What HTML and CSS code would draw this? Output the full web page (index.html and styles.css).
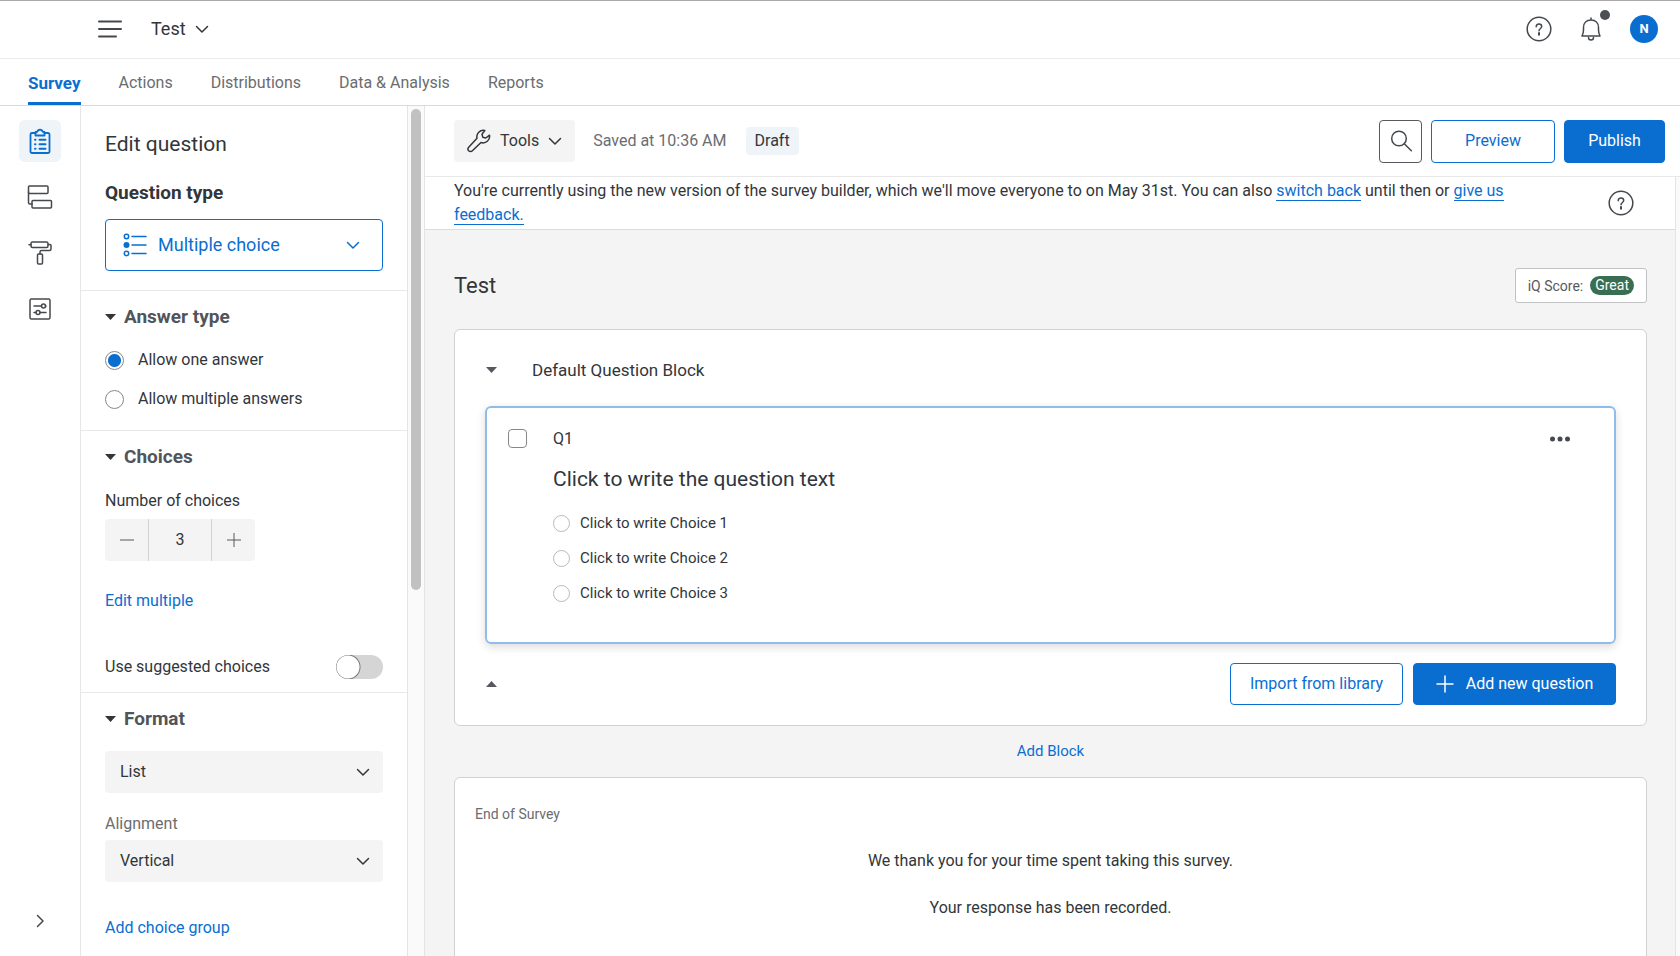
FILE: index.html
```html
<!DOCTYPE html>
<html lang="en">
<head>
<meta charset="utf-8">
<title>Test - Survey</title>
<link rel="stylesheet" href="styles.css">
</head>
<body>
<svg class="defs" aria-hidden="true">
  <symbol id="chevron" viewBox="0 0 14 14"><path d="M1.5 4.5 7 10l5.500-5.500"/></symbol>
  <symbol id="help" viewBox="0 0 26 26"><circle cx="13" cy="13" r="11.800"/><path d="M10.200 10.800c0-1.700 1.200-2.800 2.800-2.800s2.700 1 2.700 2.500c0 2-2.700 2.100-2.700 4.300"/><path d="M13 17v1.700" stroke-width="2"/></symbol>
</svg>
<div class="app">
  <header class="topbar">
    <button class="icon-btn" aria-label="Menu"><svg class="icon menu-icon" viewBox="0 0 24 20"><path d="M1 2.500h22M1 10h22M1 17.500h17"/></svg></button>
    <button class="project">Test <svg class="icon chev"><use href="#chevron"/></svg></button>
    <div class="topbar-actions">
      <button class="icon-btn" aria-label="Help"><svg class="icon i26"><use href="#help"/></svg></button>
      <button class="icon-btn bell" aria-label="Notifications"><svg class="icon i26" viewBox="0 0 26 26"><path d="M13 2v2M4 20h18c-1-2-1.500-4-1.500-6v-2.500c0-4.500-3-7.500-7.500-7.500s-7.500 3-7.500 7.500V14c0 2-.5 4-1.500 6z"/><path d="M10.500 21.500c0 1.500 1 2.500 2.500 2.500s2.500-1 2.500-2.500"/></svg><span class="dot"></span></button>
      <button class="avatar" aria-label="Account">N</button>
    </div>
  </header>
  <nav class="tabs">
    <a class="tab active" href="#">Survey</a>
    <a class="tab" href="#">Actions</a>
    <a class="tab" href="#">Distributions</a>
    <a class="tab" href="#">Data &amp; Analysis</a>
    <a class="tab" href="#">Reports</a>
  </nav>
  <div class="workspace">
    <aside class="rail">
      <button class="rail-btn selected" aria-label="Builder"><svg class="icon i26 bold" viewBox="0 0 26 26"><path d="M8.500 5H5a1.500 1.500 0 0 0-1.500 1.500V23.500A1.500 1.500 0 0 0 5 25h16a1.500 1.500 0 0 0 1.500-1.500v-17A1.500 1.500 0 0 0 21 5h-3.500"/><path d="M8.500 3.800h1.800a2.800 2.800 0 0 1 5.400 0h1.800v3.700h-9z"/><path d="M8 11.800h.5M12.500 11.800h6M8 16.300h.5M12.500 16.300h6M8 20.800h.5M12.500 20.800h6" stroke-width="2"/></svg></button>
      <button class="rail-btn" aria-label="Survey flow"><svg class="icon i26" viewBox="0 0 26 26"><rect x="1.500" y="2" width="19.500" height="7.500" rx="1"/><rect x="5" y="16.500" width="19.500" height="7.500" rx="1"/><path d="M1.500 8v10.500a1.500 1.500 0 0 0 1.500 1.500h2"/></svg></button>
      <button class="rail-btn" aria-label="Look and feel"><svg class="icon i26" viewBox="0 0 26 26"><rect x="4" y="2" width="17" height="5.500" rx="1.500"/><path d="M4 4.800H2M21 4.500h2a1 1 0 0 1 1 1V9a1.500 1.500 0 0 1-1.500 1.500h-8A1.500 1.500 0 0 0 13 12v2"/><rect x="10.500" y="14" width="5" height="10" rx="1"/></svg></button>
      <button class="rail-btn" aria-label="Survey options"><svg class="icon i26" viewBox="0 0 26 26"><rect x="3" y="3" width="20" height="20" rx="1.500"/><path d="M7 10h7.500M18.500 10h.5M7 16.500h2M13 16.500h6"/><circle cx="16.500" cy="10" r="2"/><circle cx="11" cy="16.500" r="2"/></svg></button>
      <button class="icon-btn rail-expand" aria-label="Expand"><svg class="icon chev" viewBox="0 0 14 14"><path d="M4.500 1.500 10 7l-5.500 5.500"/></svg></button>
    </aside>
    <section class="panel">
      <div class="group intro">
        <h1 class="panel-title">Edit question</h1>
        <h2 class="panel-subtitle">Question type</h2>
        <button class="type-picker">
          <svg class="icon i24" viewBox="0 0 24 24"><circle cx="3.500" cy="3.500" r="2.200"/><circle cx="3.500" cy="12" r="3" fill="currentColor" stroke="none"/><circle cx="3.500" cy="20.500" r="2.200"/><path d="M9 3.500h14M9 12h14M9 20.500h14"/></svg>
          <span>Multiple choice</span>
          <svg class="icon chev push"><use href="#chevron"/></svg>
        </button>
      </div>
      <div class="group answers">
        <h3 class="group-title"><span class="caret"></span>Answer type</h3>
        <label class="radio-row"><input class="radio" type="radio" name="answers" checked>Allow one answer</label>
        <label class="radio-row"><input class="radio" type="radio" name="answers">Allow multiple answers</label>
      </div>
      <div class="group choices">
        <h3 class="group-title"><span class="caret"></span>Choices</h3>
        <label class="field-label" for="count">Number of choices</label>
        <div class="stepper">
          <button class="step" aria-label="Fewer"><svg class="icon chev" viewBox="0 0 14 14"><path d="M0 7h14"/></svg></button>
          <input class="count" id="count" type="text" value="3">
          <button class="step" aria-label="More"><svg class="icon chev" viewBox="0 0 14 14"><path d="M0 7h14M7 0v14"/></svg></button>
        </div>
        <a class="link" href="#">Edit multiple</a>
        <label class="toggle-row">Use suggested choices<input class="toggle" type="checkbox"></label>
      </div>
      <div class="group format">
        <h3 class="group-title"><span class="caret"></span>Format</h3>
        <div class="select-wrap"><select class="select" aria-label="Format"><option>List</option></select><svg class="icon chev select-chev"><use href="#chevron"/></svg></div>
        <label class="field-label muted" for="align">Alignment</label>
        <div class="select-wrap"><select class="select" id="align"><option>Vertical</option></select><svg class="icon chev select-chev"><use href="#chevron"/></svg></div>
        <a class="link" href="#">Add choice group</a>
      </div>
    </section>
    <div class="scroll-track"><div class="scroll-thumb"></div></div>
    <main class="main">
      <div class="toolbar">
        <button class="tools"><svg class="icon i24" viewBox="0 0 24 24"><path d="M22.500 6.200 18.800 9l-3-.8-.8-3L17.800 1.500A6.500 6.500 0 0 0 10 9.300L1.700 18.200a2.600 2.600 0 0 0 0 3.600 2.600 2.600 0 0 0 3.700 0L14 13.500a6.500 6.500 0 0 0 8.500-7.300z"/></svg>Tools<svg class="icon chev"><use href="#chevron"/></svg></button>
        <span class="saved">Saved at 10:36 AM</span>
        <span class="draft">Draft</span>
        <div class="toolbar-actions">
          <button class="btn search" aria-label="Search"><svg class="icon i24" viewBox="0 0 24 24"><circle cx="10" cy="9.500" r="7.300"/><path d="m15.300 14.800 7 7"/></svg></button>
          <button class="btn outline preview">Preview</button>
          <button class="btn primary publish">Publish</button>
        </div>
      </div>
      <div class="scroller">
        <div class="content">
          <div class="notice">
            <p class="notice-text">You're currently using the new version of the survey builder, which we'll move everyone to on May 31st. You can also <a class="ulink" href="#">switch back</a> until then or <a class="ulink" href="#">give us feedback.</a></p>
            <button class="icon-btn" aria-label="Help"><svg class="icon i26"><use href="#help"/></svg></button>
          </div>
          <div class="canvas">
            <div class="title-row">
              <h2 class="survey-title">Test</h2>
              <button class="score">iQ Score: <span class="grade">Great</span></button>
            </div>
            <section class="card">
              <div class="block-head"><button class="caret soft" aria-label="Collapse block"></button><h3 class="block-name">Default Question Block</h3></div>
              <article class="question">
                <input class="check" type="checkbox" aria-label="Select Q1">
                <div class="q-body">
                  <div class="q-id">Q1</div>
                  <div class="q-text">Click to write the question text</div>
                  <label class="choice"><input class="choice-radio" type="radio" name="q1">Click to write Choice 1</label>
                  <label class="choice"><input class="choice-radio" type="radio" name="q1">Click to write Choice 2</label>
                  <label class="choice"><input class="choice-radio" type="radio" name="q1">Click to write Choice 3</label>
                </div>
                <button class="icon-btn more" aria-label="More"><svg class="dots" viewBox="0 0 20 6"><circle cx="2.500" cy="3" r="2.500"/><circle cx="10" cy="3" r="2.500"/><circle cx="17.500" cy="3" r="2.500"/></svg></button>
              </article>
              <div class="block-foot">
                <button class="caret soft up" aria-label="Collapse block"></button>
                <button class="btn outline import">Import from library</button>
                <button class="btn primary add"><svg class="icon i18" viewBox="0 0 18 18"><path d="M1 9h16M9 1v16"/></svg>Add new question</button>
              </div>
            </section>
            <button class="add-block">Add Block</button>
            <section class="card end">
              <h3 class="end-title">End of Survey</h3>
              <p class="end-text">We thank you for your time spent taking this survey.</p>
              <p class="end-text">Your response has been recorded.</p>
            </section>
          </div>
        </div>
        <div class="gutter"></div>
      </div>
    </main>
  </div>
</div>
</body>
</html>
```
FILE: styles.css
```css
* { box-sizing: border-box; }
body { margin: 0; font: 16px/24px Roboto, "Open Sans", sans-serif; color: #32363a; background: #fff; }
button, input, select { font: inherit; color: inherit; margin: 0; }
button { padding: 0; border: 0; background: none; cursor: pointer; }
h1, h2, h3, p { margin: 0; font-weight: 400; }
.defs { display: none; }
.icon { display: block; flex: none; fill: none; stroke: currentColor; stroke-width: 1.5; stroke-linecap: round; stroke-linejoin: round; }
.icon.bold { stroke-width: 1.8; }
.chev { width: 14px; height: 14px; }
.i18 { width: 18px; height: 18px; }
.i24 { width: 24px; height: 24px; }
.i26 { width: 26px; height: 26px; }
.icon-btn { display: flex; color: #45494d; }

.app { display: flex; flex-direction: column; height: 100vh; overflow: hidden; border-top: 1px solid #a9a9a9; }
.topbar { display: flex; align-items: center; height: 58px; flex: none; padding: 0 22px 2px 98px; border-bottom: 1px solid #ebebeb; }
.menu-icon { width: 24px; height: 20px; stroke-width: 2; }
.project { display: flex; align-items: center; gap: 9px; margin-left: 29px; font-size: 18px; }
.topbar-actions { display: flex; align-items: center; gap: 26px; margin-left: auto; }
.bell { position: relative; }
.dot { position: absolute; right: -6px; top: -6px; width: 10px; height: 10px; border-radius: 50%; background: #4b4e52; }
.avatar { width: 28px; height: 28px; border-radius: 50%; background: #0a6ed1; color: #fff; font-size: 13px; font-weight: 700; }

.tabs { display: flex; flex: none; gap: 38px; height: 47px; padding-left: 28px; border-bottom: 1px solid #dadada; }
.tab { color: #6a6d70; text-decoration: none; line-height: 48px; }
.tab.active { color: #0a6ed1; font-size: 17px; font-weight: 700; border-bottom: 3px solid #0a6ed1; }

.workspace { display: flex; flex: 1; min-height: 0; }
.rail { display: flex; flex-direction: column; align-items: center; gap: 14px; width: 81px; flex: none; padding: 14px 0 28px; border-right: 1px solid #e6e6e6; }
.rail-btn { display: grid; place-items: center; width: 42px; height: 42px; border-radius: 6px; color: #45494d; }
.rail-btn.selected { background: #eff4f9; color: #0a6ed1; }
.rail-expand { margin-top: auto; color: #45494d; }

.panel { width: 326px; flex: none; overflow: hidden; }
.group { display: flex; flex-direction: column; padding: 0 24px; border-bottom: 1px solid #e8e8e8; }
.group:last-child { border-bottom: 0; }
.intro { padding-top: 24px; padding-bottom: 19px; }
.panel-title { font-size: 21px; line-height: 28px; }
.panel-subtitle { margin: 23px 0 14px; font-size: 19px; font-weight: 700; }
.type-picker { display: flex; align-items: center; gap: 11px; height: 52px; padding: 0 22px 0 17px; border: 1px solid #0a6ed1; border-radius: 4px; color: #0a6ed1; font-size: 18px; }
.push { margin-left: auto; }
.group-title { display: flex; align-items: center; gap: 8px; font-size: 19px; line-height: 24px; font-weight: 700; color: #515559; }
.caret { flex: none; width: 11px; height: 6px; background: #32363a; clip-path: polygon(0 0, 100% 0, 50% 100%); }
.caret.soft { background: #56595d; }
.caret.up { clip-path: polygon(0 100%, 100% 100%, 50% 0); }
.answers { padding-top: 14px; padding-bottom: 19px; }
.radio-row { display: flex; align-items: center; gap: 14px; }
.answers .radio-row { margin-top: 15px; }
.answers .group-title { margin-bottom: 4px; }
.radio { appearance: none; width: 19px; height: 19px; border: 1px solid #85888b; border-radius: 50%; }
.radio:checked { background: radial-gradient(circle, #0a6ed1 6px, #fff 7px); }
.choices { padding-top: 14px; padding-bottom: 13px; }
.field-label { margin-top: 20px; }
.stepper { display: flex; align-self: flex-start; height: 42px; margin: 6px 0 28px; border-radius: 4px; background: #f4f4f4; overflow: hidden; }
.step { display: grid; place-items: center; width: 43px; color: #56595d; }
.step .icon { stroke-width: 1; }
.count { width: 64px; border: 1px solid #d2d2d2; border-width: 0 1px; background: none; text-align: center; }
.link { color: #0a6ed1; text-decoration: none; }
.toggle-row { display: flex; align-items: center; justify-content: space-between; margin-top: 42px; }
.toggle { appearance: none; width: 47px; height: 24px; border-radius: 12px; background: radial-gradient(circle at 12px 12px, #fff 11px, #77797c 12px, #d5d5d5 13px); }
.format { padding-top: 14px; }
.format .group-title { margin-bottom: 20px; }
.format .muted { margin-top: 19px; margin-bottom: 4px; color: #6a6d70; }
.select-wrap { position: relative; }
.select { display: block; appearance: none; width: 100%; height: 42px; padding: 0 15px; border: 0; border-radius: 4px; background: #f4f4f4; }
.select-chev { position: absolute; right: 13px; top: 14px; pointer-events: none; }
.format .link { margin-top: 34px; }
.scroll-track { width: 18px; flex: none; padding: 3px; border: 1px solid #e4e4e4; border-width: 0 1px; background: #fafafa; }
.scroll-thumb { height: 57%; border-radius: 5px; background: #c1c1c1; }

.main { display: flex; flex: 1; flex-direction: column; min-width: 0; }
.toolbar { display: flex; flex: none; align-items: center; height: 71px; padding: 0 15px 0 29px; border-bottom: 1px solid #e8e8e8; }
.tools { display: flex; align-items: center; gap: 9px; height: 42px; padding: 0 13px; border-radius: 4px; background: #f4f4f4; }
.saved { margin: 0 19px 0 18px; color: #6a6d70; }
.draft { padding: 2px 9px; border-radius: 4px; background: #eff4f9; }
.toolbar-actions { display: flex; gap: 9px; margin-left: auto; }
.btn { display: flex; align-items: center; justify-content: center; height: 42px; border: 1px solid #0a6ed1; border-radius: 4px; }
.btn.outline { color: #0a6ed1; background: #fff; }
.btn.primary { color: #fff; background: #0a6ed1; }
.btn.search { width: 43px; border-color: #56595d; color: #45494d; }
.toolbar .btn { height: 43px; }
.preview { width: 124px; }
.publish { width: 101px; }
.scroller { display: flex; flex: 1; min-height: 0; }
.content { flex: 1; min-width: 0; overflow: hidden; background: #f4f4f4; }
.gutter { width: 5px; border-left: 1px solid #e4e4e4; background: #fafafa; }
.notice { display: flex; align-items: center; justify-content: space-between; gap: 60px; padding: 2px 41px 2px 29px; border-bottom: 1px solid #dcdcdc; background: #fff; }
.notice-text { max-width: 1100px; }
.ulink { color: #0a6ed1; text-decoration: none; border-bottom: 1px solid #0a6ed1; }
.canvas { display: flex; flex-direction: column; padding: 38px 28px 0 29px; }
.title-row { display: flex; align-items: center; justify-content: space-between; margin-bottom: 26px; }
.survey-title { font-size: 22px; }
.score { display: flex; align-items: center; gap: 7px; height: 35px; padding: 0 12px; border: 1px solid #c0c2c4; border-radius: 3px; background: #fff; font-size: 14px; color: #56595d; }
.grade { padding: 0 5px; border-radius: 10px; line-height: 19px; background: #3a6e52; color: #fff; }
.card { padding: 28px 30px 20px 30px; border: 1px solid #d2d2d2; border-radius: 6px; background: #fff; }
.block-head { display: flex; align-items: center; gap: 35px; padding-left: 1px; margin-bottom: 24px; }
.block-name { font-size: 17px; }
.question { display: flex; align-items: flex-start; min-height: 238px; padding: 19px 44px 24px 21px; border: 2px solid #8fbcec; border-radius: 6px; box-shadow: 0 3px 10px rgba(0, 0, 0, .14); }
.check { appearance: none; width: 19px; height: 19px; margin: 2px 26px 0 0; border: 1px solid #85888b; border-radius: 4px; }
.q-body { flex: 1; }
.q-text { margin: 14px 0 18px; font-size: 21px; line-height: 28px; }
.choice { display: flex; align-items: center; gap: 10px; margin-bottom: 11px; font-size: 15px; }
.choice-radio { appearance: none; width: 17px; height: 17px; border: 1px solid #b9b9b9; border-radius: 50%; }
.more { padding: 9px 0; }
.dots { width: 20px; height: 6px; fill: #45494d; }
.block-foot { display: flex; align-items: center; gap: 10px; padding-left: 1px; margin-top: 19px; }
.import { width: 173px; margin-left: auto; }
.add { gap: 12px; width: 203px; }
.add-block { align-self: center; margin: 13px 0 14px; color: #0a6ed1; font-size: 15px; }
.end { padding: 24px 20px 60px; }
.end-title { margin-bottom: 23px; font-size: 14px; color: #6a6d70; }
.end-text { margin-bottom: 23px; text-align: center; }
```
